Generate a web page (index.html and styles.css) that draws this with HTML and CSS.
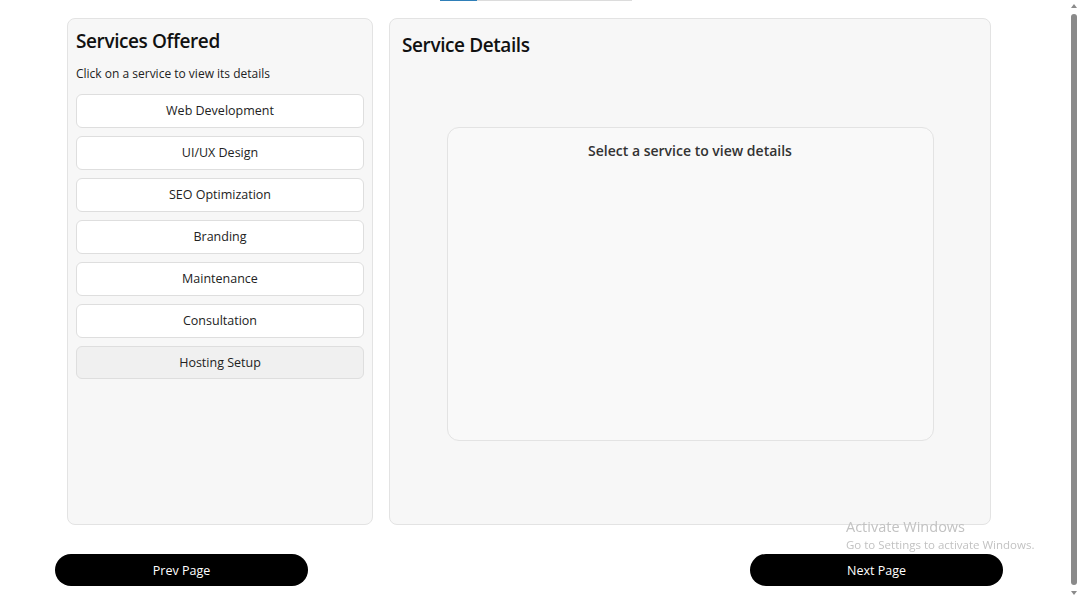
FILE: index.html
```html
<!DOCTYPE html>
<html>
<head lang="en">
    <meta charset="UTF-8">
    <title>Services</title>
    <link rel="stylesheet" href="styles.css">
</head>
<body>
<div id="progress">
    <div class="done"></div>
</div>
<div id="main">
    <div id="services">
        <h2>Services Offered</h2>
        <p class="hint">Click on a service to view its details</p>
        <ul id="list">
            <li>Web Development</li>
            <li>UI/UX Design</li>
            <li>SEO Optimization</li>
            <li>Branding</li>
            <li>Maintenance</li>
            <li>Consultation</li>
            <li class="hover">Hosting Setup</li>
        </ul>
    </div>
    <div id="details">
        <h2>Service Details</h2>
        <div id="box">
            <p id="info">Select a service to view details</p>
        </div>
    </div>
</div>
<div id="pager">
    <button>Prev Page</button>
    <button>Next Page</button>
</div>

<div id="watermark">
    <div class="big">Activate Windows</div>
    <div class="small">Go to Settings to activate Windows.</div>
</div>
<div id="scrollbar">
    <div class="arrow up"></div>
    <div class="thumb"></div>
    <div class="arrow down"></div>
</div>

<script>
    var aLi = document.getElementById("list").getElementsByTagName("li");
    var oInfo = document.getElementById("info");
    for (var i = 0; i < aLi.length; i++) {
        aLi[i].onclick = function () {
            oInfo.innerHTML = this.innerHTML;
        };
    }
</script>
</body>
</html>
```
FILE: styles.css
```css
*{
    margin: 0;
    padding: 0;
    box-sizing: border-box;
}
body{
    background: #ffffff;
    font-family: "Open Sans", "Noto Sans", sans-serif;
    color: #111111;
    padding-right: 22px;
}
li{
    list-style: none;
}
#progress{
    width: 192px;
    height: 1px;
    margin-left: 440px;
    background: #dcdcdc;
}
#progress .done{
    width: 37px;
    height: 1px;
    background: #2f7fb8;
}
#main{
    display: flex;
    gap: 16px;
    width: 924px;
    height: 507px;
    margin: 17px auto 0;
}
#services, #details{
    background: #f7f7f7;
    border: 1px solid #e3e3e3;
    border-radius: 8px;
}
#services{
    width: 306px;
    padding: 10px 8px;
}
#details{
    flex: 1;
    padding: 14px 12px;
}
h2{
    font-size: 19px;
    font-weight: 600;
    line-height: 24px;
    letter-spacing: -0.4px;
}
.hint{
    font-size: 12px;
    margin-top: 13px;
    line-height: 16px;
    color: #222222;
}
#list{
    display: flex;
    flex-direction: column;
    gap: 8px;
    margin-top: 12px;
}
#list li{
    height: 34px;
    line-height: 32px;
    background: #ffffff;
    border: 1px solid #dedede;
    border-radius: 6px;
    text-align: center;
    font-size: 12.5px;
    color: #222222;
    cursor: pointer;
}
#list li.hover{
    background: #f0f0f0;
    height: 33px;
}
#box{
    width: 487px;
    height: 314px;
    margin: 70px auto 0;
    background: #f9f9f9;
    border: 1px solid #e3e3e3;
    border-radius: 12px;
    padding-top: 13px;
}
#info{
    text-align: center;
    font-size: 14px;
    font-weight: 600;
    color: #333333;
}
#pager{
    display: flex;
    justify-content: space-between;
    width: 948px;
    margin: 29px auto 0;
}
#pager button{
    width: 253px;
    height: 32px;
    border: 0;
    border-radius: 16px;
    background: #000000;
    color: #ffffff;
    font-family: "Open Sans", "Noto Sans", sans-serif;
    font-size: 12.5px;
    cursor: pointer;
}
#watermark{
    position: fixed;
    left: 846px;
    top: 517px;
    color: #c2c2c2;
    pointer-events: none;
}
#watermark .big{
    font-size: 14.5px;
    line-height: 20px;
}
#watermark .small{
    font-size: 11.5px;
    line-height: 16px;
}
#scrollbar{
    position: fixed;
    top: 0;
    right: 0;
    width: 12px;
    height: 599px;
    background: #ffffff;
}
#scrollbar .thumb{
    position: absolute;
    left: 3px;
    top: 14px;
    width: 6px;
    height: 571px;
    background: #8a8a8a;
    border-radius: 3px;
}
#scrollbar .arrow{
    position: absolute;
    left: 3px;
    width: 0;
    height: 0;
    border-left: 3px solid transparent;
    border-right: 3px solid transparent;
}
#scrollbar .up{
    top: 4px;
    border-bottom: 4px solid #8a8a8a;
}
#scrollbar .down{
    bottom: 4px;
    border-top: 4px solid #8a8a8a;
}
```
